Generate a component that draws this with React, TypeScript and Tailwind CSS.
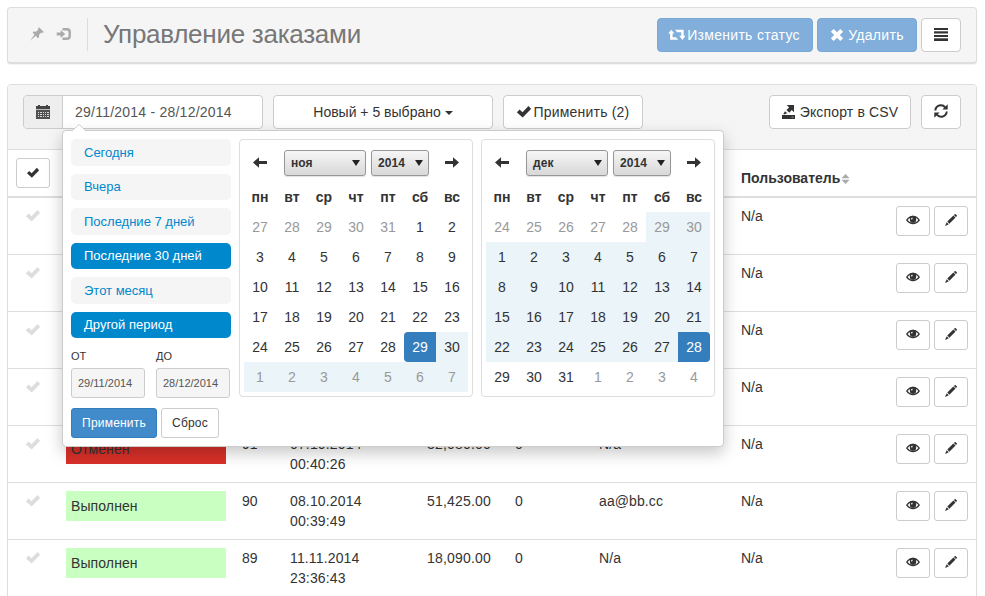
import type { ReactNode } from "react";

type IconProps = { className?: string };

function Glyph({ children, className = "" }: { children: ReactNode; className?: string }) {
  return (
    <svg viewBox="0 0 14 14" width="14" height="14" fill="currentColor" className={`shrink-0 ${className}`}>
      {children}
    </svg>
  );
}

const Check = ({ className }: IconProps) => (
  <Glyph className={className}>
    <path d="M11.500 1L14.200 3.900 5.700 12.600 -.1 7.300 2.500 4.600 5.500 7.200z" />
  </Glyph>
);
const Cross = ({ className }: IconProps) => (
  <Glyph className={className}>
    <path d="M3.700.9L7 4.200 10.300.9 13.100 3.700 9.800 7 13.100 10.300 10.300 13.100 7 9.800 3.700 13.100.9 10.300 4.200 7 .9 3.700z" />
  </Glyph>
);
const Pushpin = () => (
  <Glyph>
    <path d="M9 .2L13.800 5 12.800 5.900 11.400 5.500 9.100 7.800 9 10.200 8 11.200 5.600 8.700 0 13.900 4.500 7.600 2.600 5.400 3.500 4.500 5.900 4.800 8.400 2.500 8 1.200z" />
  </Glyph>
);
const LogIn = () => (
  <svg viewBox="0 0 15 14" width="15" height="14" fill="currentColor" className="shrink-0">
    <path d="M6.500 1h4.500Q14.900 1 14.900 4.700v4.600Q14.900 13 11 13H6.500v-2.400h4.300q1.700 0 1.700-1.700V5.100q0-1.700-1.700-1.700H6.500z" />
    <path d="M.7 5.400h4V3l4.500 4L4.700 11V8.600H.7z" />
  </svg>
);
const Calendar = () => (
  <svg viewBox="0 0 14 14" width="14" height="14" shapeRendering="crispEdges" className="shrink-0">
    <path d="M0 1h2V0h2v1h6V0h2v1h2v3H0z" fill="#444" />
    <path d="M0 4h14v1H0z" fill="#bbb" />
    <path d="M0 5h14v9H0z" fill="#505050" />
    <path
      d="M2 7h1v1H2zM4 7h2v1H4zM7 7h1v1H7zM9 7h1v1H9zM11 7h2v1h-2zM2 9h1v1H2zM4 9h2v1H4zM7 9h1v1H7zM9 9h1v1H9zM11 9h2v1h-2zM2 11h1v1H2zM4 11h2v1H4zM7 11h1v1H7zM9 11h1v1H9zM11 11h2v1h-2z"
      fill="#d8d8d8"
    />
  </svg>
);
const Retweet = () => (
  <svg viewBox="0 0 18 12" width="18" height="12" fill="currentColor" className="shrink-0">
    <path d="M3.300.8L6.400 4.600H4.600V8.200H8L10.200 10.700H2.100V4.600H.2z" />
    <path d="M7 .8H15.700V6.800H17.600L14.400 10.900 11.200 6.800H13.200V3.300H9.200z" />
  </svg>
);
const AlignJustify = () => (
  <svg viewBox="0 0 14 13" width="14" height="13" fill="currentColor" shapeRendering="crispEdges">
    <path d="M0 0h14v2H0zM0 4h14v1H0zM0 7h14v2H0zM0 11h14v2H0z" />
    <path d="M0 3h14v1H0zM0 10h14v1H0z" opacity=".7" />
    <path d="M0 5h14v1H0z" opacity=".5" />
  </svg>
);
const Export = () => (
  <Glyph>
    <path d="M4.800 0H12V7.200L9.800 5.100 7.300 7.700 4.500 5.100 7.100 2.400z" />
    <path d="M3 6.200L5.600 8.600H3.800L3.400 9.300H1.200z" />
    <path d="M0 10H13V14H0z" />
    <path d="M9.500 11.600h2v1h-2z" fill="#999" />
  </Glyph>
);
const Refresh = () => (
  <Glyph>
    <g fill="none" stroke="currentColor" strokeWidth="2">
      <path d="M1.300 6.500A5.600 5.600 0 0 1 11.200 3.300" />
      <path d="M12.700 7.500A5.600 5.600 0 0 1 2.800 10.700" />
    </g>
    <path d="M13.700.3V5.600H8.400zM.3 13.700V8.400H5.600z" />
  </Glyph>
);
const Eye = () => (
  <svg viewBox="0 0 14 10" width="14" height="10" className="shrink-0">
    <path
      d="M.8 5.200Q3.300 1.300 7 1.300T13.200 5.200Q10.500 8.700 7 8.700T.8 5.200z"
      fill="none"
      stroke="currentColor"
      strokeWidth="1.300"
    />
    <path d="M4 1.700Q7 0 10 1.700 11.200 7.900 7 8 2.800 7.900 4 1.700z" fill="currentColor" />
    <path d="M5 3.400Q5.700 2.400 6.700 2.800L6.200 4.600Q5.200 4.600 5 3.400z" fill="#fff" />
  </svg>
);
const Pencil = () => (
  <svg viewBox="0 0 12 12" width="12" height="12" fill="currentColor" className="shrink-0">
    <path d="M10.200 -.2L12.200 1.800 11 3.100 8.900 1zM8.400 1.500L10.500 3.600 4.400 9.700 2.300 7.600zM1.700 8.200L3.800 10.300 0 12z" />
  </svg>
);
const Arrow = ({ flip = false }: { flip?: boolean }) => (
  <svg viewBox="0 0 14 11" width="14" height="11" fill="#333" className={`mb-px ${flip ? "-scale-x-100" : ""}`}>
    <path d="M0 5.500L6 .2V4H14V7H6V10.800z" />
  </svg>
);

const WEEKDAYS = ["пн", "вт", "ср", "чт", "пт", "сб", "вс"];

type MonthProps = {
  month: string;
  days: number[];
  first: number;
  last: number;
  range: [number, number];
  active: number;
  edge: string;
};

function Select({ label, width }: { label: string; width: string }) {
  return (
    <div
      className={`flex h-[26px] items-center justify-between rounded-[3px] border border-[#979797] bg-linear-to-b from-[#f6f6f6] to-[#d8d8d8] pl-1.5 pr-[5px] text-[12px] font-bold shadow-[0_1px_1px_rgba(0,0,0,.12)] ${width}`}
    >
      <span className="tracking-[.1px]">{label}</span>
      <span className="h-0 w-0 border-x-[4.5px] border-t-[6px] border-x-transparent border-t-[#222]" />
    </div>
  );
}

function Month({ month, days, first, last, range, active, edge }: MonthProps) {
  return (
    <div className="h-[258px] w-[234px] rounded-[4px] border border-[#ddd] p-1">
      <div className="flex h-[38px] items-center">
        <div className="flex w-8 justify-center">
          <Arrow />
        </div>
        <div className="flex flex-1 gap-[5px] pl-2">
          <Select label={month} width="w-[82px]" />
          <Select label="2014" width="w-[58px]" />
        </div>
        <div className="flex w-8 justify-center">
          <Arrow flip />
        </div>
      </div>
      <div className="grid grid-cols-7 text-center leading-[30px]">
        {WEEKDAYS.map((d) => (
          <span key={d} className="h-[30px] font-bold">
            {d}
          </span>
        ))}
        {days.map((d, i) => {
          const off = i < first || i > last;
          const tone =
            i === active
              ? `bg-[#357ebd] text-white ${edge}`
              : `${i >= range[0] && i <= range[1] ? "bg-[#ebf4f8]" : ""} ${off ? "text-[#999]" : ""}`;
          return (
            <span key={i} className={`h-[30px] ${tone}`}>
              {d}
            </span>
          );
        })}
      </div>
    </div>
  );
}

const seq = (a: number, b: number) => Array.from({ length: b - a + 1 }, (_, i) => a + i);

const RANGES = [
  { label: "Сегодня", active: false },
  { label: "Вчера", active: false },
  { label: "Последние 7 дней", active: false },
  { label: "Последние 30 дней", active: true },
  { label: "Этот месяц", active: false },
  { label: "Другой период", active: true },
];

function DatePopup() {
  return (
    <div className="absolute left-[39px] top-[35px] z-10 flex h-[317px] w-[662px] gap-2 rounded-[4px] border border-[#ccc] bg-white p-2 shadow-[0_6px_16px_rgba(0,0,0,.22)]">
      <svg width="14" height="8" viewBox="0 0 14 8" className="absolute -top-[7px] left-[9px]">
        <path d="M0 7L7 0 14 7V8H0z" fill="#fff" />
        <path d="M0 7L7 .5 14 7" fill="none" stroke="#ccc" />
      </svg>
      <div className="w-40">
        <ul className="flex flex-col gap-2 text-[13px] leading-[18.57px]">
          {RANGES.map((r) => (
            <li
              key={r.label}
              className={`rounded-[5px] px-[13px] pb-[3.5px] pt-[4.5px] ${r.active ? "bg-[#08c] text-white" : "bg-[#f5f5f5] text-[#08c]"}`}
            >
              {r.label}
            </li>
          ))}
        </ul>
        <div className="mt-[10px] flex gap-[11px] text-[11px]">
          {[
            ["ОТ", "29/11/2014"],
            ["ДО", "28/12/2014"],
          ].map(([label, value]) => (
            <label key={label} className="block w-[74px]">
              <span className="block h-5 leading-4">{label}</span>
              <span className="flex h-[30px] items-center rounded-[3px] border border-[#ccc] bg-[#f5f5f5] px-1.5 text-[#555]">
                {value}
              </span>
            </label>
          ))}
        </div>
        <div className="mt-[10px] flex gap-1 text-[12px]">
          <button className="h-[30px] w-[86px] rounded-[3px] border border-[#357ebd] bg-[#428bca] tracking-[.2px] text-white">
            Применить
          </button>
          <button className="h-[30px] w-[58px] rounded-[3px] border border-[#ccc] bg-white tracking-[.2px]">Сброс</button>
        </div>
      </div>
      <Month
        month="ноя"
        days={[...seq(27, 31), ...seq(1, 30), ...seq(1, 7)]}
        first={5}
        last={34}
        range={[34, 41]}
        active={33}
        edge="rounded-l-[4px]"
      />
      <Month
        month="дек"
        days={[...seq(24, 30), ...seq(1, 31), ...seq(1, 4)]}
        first={7}
        last={37}
        range={[5, 34]}
        active={34}
        edge="rounded-r-[4px]"
      />
    </div>
  );
}

type Order = {
  user: string;
  details?: { status: string; color: string; id: string; date: string; time: string; sum: string; mail: string };
};

const ORDERS: Order[] = [
  { user: "N/a" },
  { user: "N/a" },
  { user: "N/a" },
  { user: "N/a" },
  {
    user: "N/a",
    details: { status: "Отменен", color: "bg-[#d9302a]", id: "91", date: "07.10.2014", time: "00:40:26", sum: "32,080.00", mail: "N/a" },
  },
  {
    user: "N/a",
    details: { status: "Выполнен", color: "bg-[#c9ffc1]", id: "90", date: "08.10.2014", time: "00:39:49", sum: "51,425.00", mail: "aa@bb.cc" },
  },
  {
    user: "N/a",
    details: { status: "Выполнен", color: "bg-[#c9ffc1]", id: "89", date: "11.11.2014", time: "23:36:43", sum: "18,090.00", mail: "N/a" },
  },
];

const COLUMNS = "grid grid-cols-[50px_176px_48px_137px_88px_84px_142px_155px_1fr]";
const BUTTON = "flex items-center justify-center rounded-[4px] border border-[#ccc] bg-white";
const SMALL = "flex h-[30px] w-[34px] items-center justify-center rounded-[3px] border border-[#ccc] bg-white";

export default function App() {
  return (
    <div className="h-[596px] w-[985px] overflow-hidden bg-white pl-[7px] pt-[7px] font-['Liberation_Sans',Arial,sans-serif] text-[14px] leading-5 text-[#333]">
      <header className="flex h-[57px] w-[970px] items-center rounded-[4px] border border-b-2 border-[#ddd] bg-[#f5f5f5] px-[15px] shadow-[0_1px_1px_rgba(0,0,0,.05)]">
        <div className="mb-[2px] flex h-[33px] items-center gap-[12px] border-r border-[#ddd] pl-[7px] pr-[16px] text-[#aaa]">
          <Pushpin />
          <LogIn />
        </div>
        <h1 className="mb-[3px] pl-[15px] text-[26px] leading-[30px] tracking-[-.27px] text-[#777]">Управление заказами</h1>
        <div className="ml-auto flex gap-1 text-white">
          <button className="flex h-[34px] w-[156px] items-center justify-center gap-px rounded-[4px] border border-[#78a9d6] bg-[#81aeda] pr-[2px]">
            <Retweet />
            <span className="tracking-[.3px]">Изменить статус</span>
          </button>
          <button className="flex h-[34px] w-[100px] items-center justify-center gap-1 rounded-[4px] border border-[#78a9d6] bg-[#81aeda]">
            <Cross />
            <span className="tracking-[.3px]">Удалить</span>
          </button>
          <button className={`${BUTTON} h-[34px] w-10 pb-px text-[#333]`}>
            <AlignJustify />
          </button>
        </div>
      </header>

      <main className="mt-5 h-[560px] w-[970px] rounded-[4px] border border-[#ddd] bg-white">
        <div className="relative flex h-[65px] items-start rounded-t-[3px] border-b border-[#ddd] bg-[#f5f5f5] px-[15px] pt-[10px]">
          <div className="flex h-[34px] w-[240px] rounded-[4px] border border-[#ccc] bg-white text-[#555]">
            <span className="flex w-[39px] items-center justify-center rounded-l-[3px] border-r border-[#ccc] bg-[#eee]">
              <Calendar />
            </span>
            <span className="flex items-center pl-3 tracking-[.23px]">29/11/2014 - 28/12/2014</span>
          </div>
          <button className={`${BUTTON} ml-[10px] h-[34px] w-[220px] gap-1`}>
            <span>Новый + 5 выбрано</span>
            <span className="mt-0.5 h-0 w-0 border-x-[4px] border-t-[4px] border-x-transparent border-t-[#333]" />
          </button>
          <button className={`${BUTTON} ml-[10px] h-[34px] w-[140px] gap-[3px]`}>
            <Check />
            <span className="tracking-[.2px]">Применить (2)</span>
          </button>
          <button className={`${BUTTON} ml-auto h-[34px] w-[142px] gap-[4px]`}>
            <Export />
            <span className="tracking-[.15px]">Экспорт в CSV</span>
          </button>
          <button className={`${BUTTON} ml-[10px] h-[34px] w-10 pb-[2px]`}>
            <Refresh />
          </button>
          <div className="absolute left-[15px] top-[10px]">
            <DatePopup />
          </div>
        </div>

        <div className={`${COLUMNS} h-12 border-b-2 border-[#ddd] font-bold`}>
          <div className="pl-2 pt-2">
            <span className={SMALL}>
              <Check className="h-3 w-3" />
            </span>
          </div>
          <div className="col-start-8 flex items-center gap-px pl-2 pt-[10px]">
            <span>Пользователь</span>
            <svg width="9" height="10" viewBox="0 0 9 10" fill="#aaa" className="mt-0.5">
              <path d="M4.500 0L8.500 4.300H.5zM4.500 10L.5 5.700H8.500z" />
            </svg>
          </div>
        </div>

        {ORDERS.map(({ user, details: o }, i) => (
          <div key={i} className={`${COLUMNS} ${i === 0 ? "h-14" : "h-[57px] border-t border-[#ddd]"} *:px-2 *:pt-2`}>
            <div className="flex justify-center text-[#ddd]">
              <Check className="mt-[3px]" />
            </div>
            {o && (
              <>
                <div>
                  <div className={`h-[30px] p-[5px] tracking-[.1px] ${o.color}`}>{o.status}</div>
                </div>
                <div>{o.id}</div>
                <div className="whitespace-pre-line tracking-[.15px]">{`${o.date}\n${o.time}`}</div>
                <div className="tracking-[.2px]">{o.sum}</div>
                <div>0</div>
                <div className="tracking-[.1px]">{o.mail}</div>
              </>
            )}
            <div className="col-start-8">{user}</div>
            <div className="flex gap-1">
              <span className={`${SMALL} pb-[2px]`}>
                <Eye />
              </span>
              <span className={`${SMALL} pb-[2px]`}>
                <Pencil />
              </span>
            </div>
          </div>
        ))}
      </main>
    </div>
  );
}
